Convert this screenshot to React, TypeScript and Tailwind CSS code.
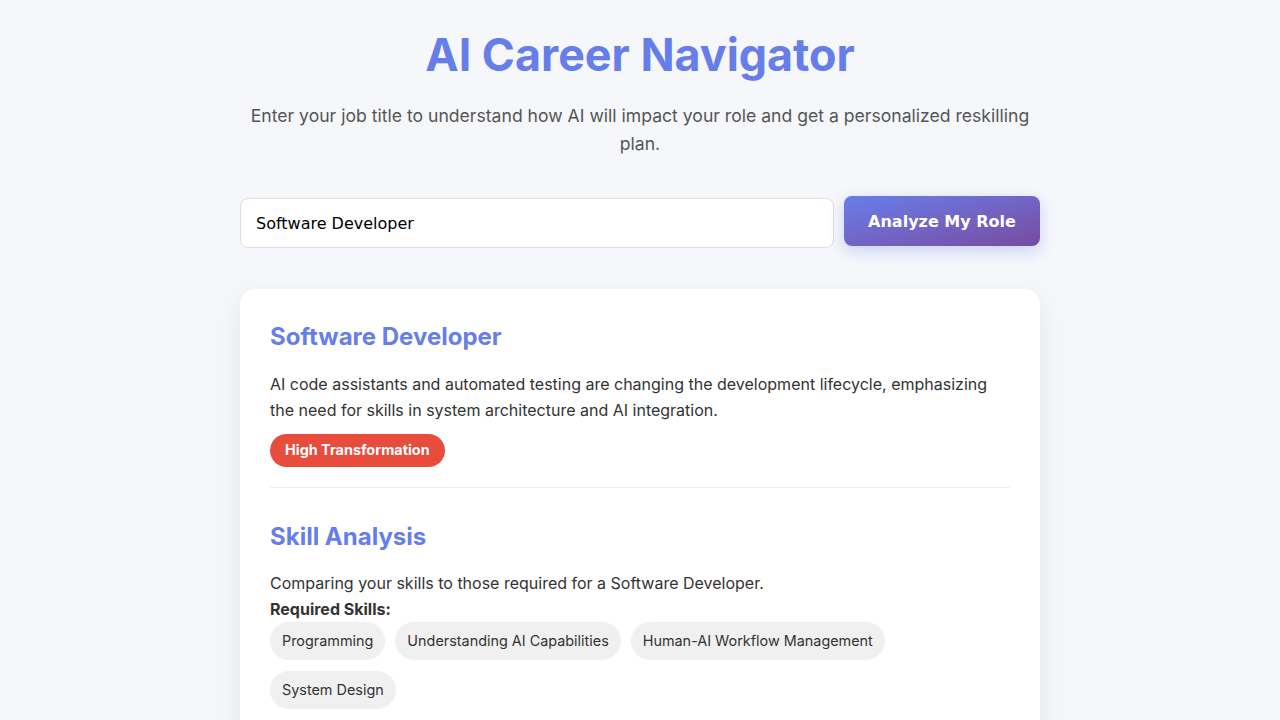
import React from "react";

const skills = [
  "Programming",
  "Understanding AI Capabilities",
  "Human-AI Workflow Management",
  "System Design",
];

export default function App() {
  return (
    <div
      className="min-h-screen bg-[#f5f7fa] text-[#333]"
      style={{ fontFamily: "Inter, 'Noto Sans', sans-serif" }}
    >
      <div className="mx-auto w-[800px] pt-[20px]">
        <h1 className="text-center text-[44.8px] font-bold leading-[70px] text-[#667eea]">
          AI Career Navigator
        </h1>
        <p className="mt-[12px] text-center text-[17.6px] leading-[28px] text-[#555]">
          Enter your job title to understand how AI will impact your role and get a personalized reskilling plan.
        </p>
        <div className="mt-[40px] flex items-center gap-[10px]">
          <input
            className="h-[50px] flex-1 rounded-[8px] border border-[#ddd] bg-white px-[15px] text-[16px] text-black outline-none"
            style={{ fontFamily: "'DejaVu Sans', sans-serif" }}
            defaultValue="Software Developer"
          />
          <button
            className="h-[50px] w-[196px] -translate-y-[2px] rounded-[8px] bg-gradient-to-br from-[#667eea] to-[#764ba2] pt-[2px] text-[16px] font-bold text-white shadow-[0_5px_15px_rgba(102,126,234,0.3)]"
            style={{ fontFamily: "'DejaVu Sans', sans-serif" }}
          >
            Analyze My Role
          </button>
        </div>
        <div className="mt-[41px] rounded-[15px] bg-white p-[30px] shadow-[0_10px_30px_rgba(0,0,0,0.08)]">
          <section className="border-b border-[#eee] pb-[20px]">
            <h2 className="text-[24px] font-bold leading-[36px] text-[#667eea]">Software Developer</h2>
            <p className="mt-[16px] text-[16px] leading-[26px] text-[#333]">
              AI code assistants and automated testing are changing the development lifecycle, emphasizing the need for skills in system architecture and AI integration.
            </p>
            <span className="mt-[11px] inline-block rounded-full bg-[#e74c3c] px-[15px] py-[6px] text-[14.4px] font-bold leading-[20.5px] text-white">
              High Transformation
            </span>
          </section>
          <section className="pt-[31px]">
            <h2 className="text-[24px] font-bold leading-[36px] text-[#667eea]">Skill Analysis</h2>
            <p className="mt-[15px] text-[16px] leading-[26px] text-[#333]">
              Comparing your skills to those required for a Software Developer.
            </p>
            <p className="text-[16px] font-bold leading-[26px] text-[#333]">Required Skills:</p>
            <div className="flex flex-wrap gap-x-[10px] gap-y-[11px]">
              {skills.map((s) => (
                <span
                  key={s}
                  className="rounded-[20px] bg-[#f0f0f0] px-[12px] py-[8px] text-[14.4px] leading-[22px] text-[#333]"
                >
                  {s}
                </span>
              ))}
            </div>
          </section>
        </div>
      </div>
    </div>
  );
}
